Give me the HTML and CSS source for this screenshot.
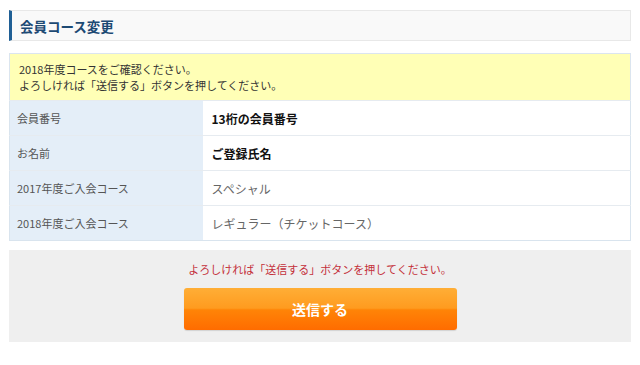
FILE: index.html
```html
<!DOCTYPE html>
<html lang="ja">
<head>
  <meta charset="UTF-8">
  <title>会員コース変更</title>
  <link rel="stylesheet" href="styles.css">
</head>
<body>
  <div class="page">
    <h2 class="page-title">会員コース変更</h2>

    <div class="notice">
      2018年度コースをご確認ください。<br>
      よろしければ「送信する」ボタンを押してください。
    </div>

    <table class="info">
      <tr>
        <th>会員番号</th>
        <td class="strong">13桁の会員番号</td>
      </tr>
      <tr>
        <th>お名前</th>
        <td class="strong">ご登録氏名</td>
      </tr>
      <tr>
        <th>2017年度ご入会コース</th>
        <td>スペシャル</td>
      </tr>
      <tr>
        <th>2018年度ご入会コース</th>
        <td>レギュラー（チケットコース）</td>
      </tr>
    </table>

    <div class="submit-area">
      <p class="submit-note">よろしければ「送信する」ボタンを押してください。</p>
      <button class="submit-button">送信する</button>
    </div>
  </div>
</body>
</html>
```

FILE: styles.css
```css
body {
  margin: 0;
  padding: 0;
  background: #fff;
  font-family: "Noto Sans CJK JP", "Noto Sans", sans-serif;
  color: #333;
}

.page {
  padding: 10px 9px 0 9px;
}

.page-title {
  margin: 0;
  height: 31px;
  line-height: 30px;
  box-sizing: border-box;
  padding-left: 8px;
  font-size: 13.5px;
  font-weight: bold;
  color: #1d4a74;
  background: #f9f9f9;
  border: 1px solid #e8e8e8;
  border-left: 3px solid #1f5f95;
}

.notice {
  margin-top: 12px;
  padding: 7px 9px 7px 9px;
  font-size: 11px;
  line-height: 16px;
  color: #333;
  background: #ffffb6;
  border: 1px solid #dbe5ef;
  border-bottom: none;
}

.info {
  width: 100%;
  border-collapse: collapse;
  border: 1px solid #d9e4ee;
}

.info th,
.info td {
  height: 35px;
  box-sizing: border-box;
  border-top: 1px solid #e6ebf0;
  text-align: left;
  vertical-align: middle;
}

.info th {
  width: 193px;
  padding-left: 7px;
  font-size: 11px;
  font-weight: normal;
  color: #555;
  background: #e4eef8;
}

.info td {
  padding-left: 9px;
  font-size: 12px;
  color: #666;
  background: #fff;
}

.info td.strong {
  font-weight: bold;
  color: #111;
}

.submit-area {
  margin-top: 9px;
  padding: 12px 0 12px;
  background: #efefef;
  text-align: center;
}

.submit-note {
  margin: 0 0 12px;
  font-size: 11px;
  line-height: 14px;
  color: #c4303a;
}

.submit-button {
  width: 273px;
  height: 42px;
  border: none;
  border-radius: 3px;
  background: linear-gradient(to bottom, #ffae36 0%, #ff9b1f 48%, #ff8407 52%, #ff6c00 100%);
  box-shadow: 0 1px 1px rgba(0, 0, 0, 0.12);
  color: #fff;
  font-family: "Noto Sans CJK JP", sans-serif;
  font-size: 14px;
  font-weight: bold;
  cursor: pointer;
}
```
